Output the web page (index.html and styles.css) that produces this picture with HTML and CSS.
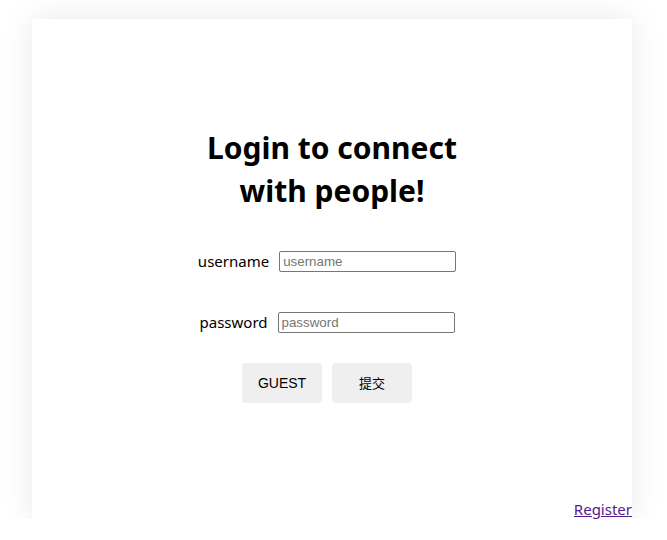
FILE: index.html
```html
<!DOCTYPE html>
<html>
<head>
<meta charset="utf-8">
<link rel="stylesheet" href="styles.css">
</head>
<body>
<div class="card">
  <div class="content">
    <h1 class="title">Login to connect<br>with people!</h1>
    <form class="form">
      <div class="row"><label class="label">username</label><input class="field" type="text" placeholder="username"></div>
      <div class="row"><label class="label">password</label><input class="field" type="password" placeholder="password"></div>
      <div class="row buttons"><button type="button" class="btn">GUEST</button><button type="button" class="btn cjk">提交</button></div>
    </form>
  </div>
  <a class="register" href="#">Register</a>
</div>
</body>
</html>
```
FILE: styles.css
```css
html, body { margin: 0; padding: 0; background: #fff; }
body { font-family: "Noto Sans", "Open Sans", sans-serif; }
.card {
  position: relative;
  box-sizing: border-box;
  width: 600px;
  height: 500px;
  padding-bottom: 10px;
  margin: 19px 0 0 32px;
  background: #fff;
  box-shadow: 0 0 30px rgba(0,0,0,0.09);
  display: flex;
  align-items: center;
  justify-content: center;
}
.content { display: flex; flex-direction: column; align-items: center; }
.title {
  margin: 0;
  font-size: 30px;
  line-height: 43px;
  font-weight: 700;
  text-align: center;
  color: #000;
}
.form { display: flex; flex-direction: column; align-items: center; margin-top: 39px; }
.row { display: flex; align-items: center; padding-right: 10px; }
.row + .row { margin-top: 40px; }
.row.buttons { margin-top: 30px; }
.label { font-size: 15px; color: #000; margin-right: 10px; }
.field {
  box-sizing: border-box;
  width: 177px;
  height: 21px;
  border: 1px solid #767676;
  border-radius: 2px;
  padding: 1px 3px;
  font: 13.33px "Liberation Sans", Arial, sans-serif;
}
.field::placeholder { color: #757575; }
.btn {
  width: 80px;
  height: 40px;
  border: none;
  border-radius: 4px;
  background: #efefef;
  font: 14px "Liberation Sans", "Noto Sans CJK SC", sans-serif;
  color: #000;
  margin-right: 10px;
}
.btn.cjk { font-size: 13px; }
.btn:last-child { margin-right: 0; }
.register {
  position: absolute;
  right: 0;
  bottom: 0;
  font-size: 15px;
  line-height: 20px;
  color: #551a8b;
  text-decoration: underline;
}
```
